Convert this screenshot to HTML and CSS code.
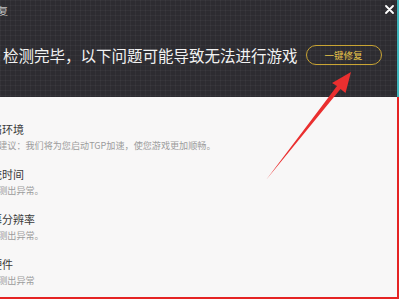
FILE: index.html
```html
<!DOCTYPE html>
<html lang="zh-CN">
<head>
    <meta charset="UTF-8">
    <meta name="viewport" content="width=device-width, initial-scale=1.0">
    <title>一键修复</title>
    <link rel="stylesheet" href="styles.css">
</head>
<body>
    <div class="window">
        <header class="top">
            <div class="titlebar">
                <span class="title">复</span>
                <span class="close">
                    <svg width="9" height="9" viewBox="0 0 9 9"><path d="M1 1L8 8M8 1L1 8" stroke="#ffffff" stroke-width="1.8" stroke-linecap="round"/></svg>
                </span>
            </div>
            <div class="summary">
                <h1>检测完毕，以下问题可能导致无法进行游戏</h1>
                <button type="button" class="fix">一键修复</button>
            </div>
        </header>

        <ul class="issues">
            <li>
                <div class="name">网络环境</div>
                <div class="tip">修复建议：我们将为您启动TGP加速，使您游戏更加顺畅。</div>
            </li>
            <li>
                <div class="name">系统时间</div>
                <div class="tip">未检测出异常。</div>
            </li>
            <li>
                <div class="name">屏幕分辨率</div>
                <div class="tip">未检测出异常。</div>
            </li>
            <li>
                <div class="name">软硬件</div>
                <div class="tip">未检测出异常</div>
            </li>
        </ul>

        <!-- annotation arrow drawn over the screenshot -->
        <svg class="arrow" width="399" height="299" viewBox="0 0 399 299">
            <polygon points="351,72 345.5,93 340.5,89 266,180 337,86 332,83" fill="#ea2f2f"/>
        </svg>
    </div>
</body>
</html>
```

FILE: styles.css
```css
body {
    margin: 0;
    padding: 0;
    background-color: #f8f7f7;
    font-family: "Noto Sans CJK SC", "Noto Sans", sans-serif;
    overflow: hidden;
}

.window {
    position: relative;
    width: 399px;
    height: 299px;
    overflow: hidden;
    background-color: #f8f7f7;
}

.top {
    height: 97px;
    box-sizing: border-box;
    border-right: 2px solid #3fb6bd;
    background-color: #2d2c31;
    background-image:
        linear-gradient(rgba(255, 255, 255, 0.035) 1px, transparent 1px),
        linear-gradient(90deg, rgba(255, 255, 255, 0.035) 1px, transparent 1px);
    background-size: 5px 5px;
}

.titlebar {
    display: flex;
    justify-content: space-between;
    align-items: center;
    height: 20px;
}

.title {
    margin-left: -2px;
    font-size: 10px;
    color: #c4c4c4;
}

.close {
    display: flex;
    margin-right: 3px;
    margin-top: -2px;
}

.summary {
    display: flex;
    align-items: center;
    height: 20px;
    padding: 25px 0 32px 3px;
}

h1 {
    margin: 0;
    font-size: 15.5px;
    font-weight: normal;
    line-height: 20px;
    color: #f2f2f2;
    white-space: nowrap;
}

.fix {
    margin-left: 8px;
    width: 76px;
    height: 20px;
    padding: 0;
    border: 1px solid #c9a433;
    border-radius: 10px;
    background: transparent;
    color: #e8c54a;
    font-family: inherit;
    font-size: 9.5px;
    line-height: 18px;
}

/* the window is cropped on the left, so the list starts off-screen */
.issues {
    list-style: none;
    margin: 0 0 0 -20px;
    padding: 25px 0 0 0;
    width: 419px;
    height: 202px;
    box-sizing: border-box;
    border-right: 2px solid #e52323;
    border-bottom: 2px solid #e52323;
}

.issues li {
    margin-bottom: 15px;
}

.name {
    font-size: 11px;
    line-height: 14px;
    color: #3a3a3a;
    white-space: nowrap;
}

.tip {
    margin-top: 2px;
    font-size: 9.1px;
    line-height: 14px;
    color: #9c9c9c;
    white-space: nowrap;
}

.arrow {
    position: absolute;
    left: 0;
    top: 0;
    pointer-events: none;
}
```
